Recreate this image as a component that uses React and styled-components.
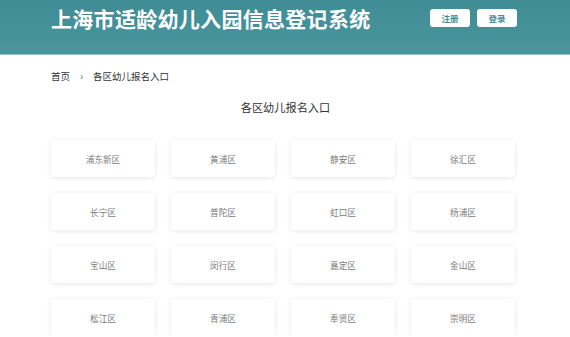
import React from "react";
import styled, { createGlobalStyle } from "styled-components";

const Global = createGlobalStyle`
  html, body { margin: 0; padding: 0; background: #fff; }
  body { font-family: "Noto Sans CJK SC", "Noto Sans", sans-serif; }
  * { box-sizing: border-box; }
`;

const Header = styled.header`
  height: 55px;
  background: linear-gradient(180deg, #3f8c95 0%, #45929b 60%, #4a959d 100%);
  border-bottom: 1px solid #8cc1c6;
`;

const Inner = styled.div`
  width: 466px;
  margin-left: 51px;
`;

const HeaderInner = styled(Inner)`
  display: flex;
  align-items: flex-start;
  justify-content: space-between;
  padding-top: 6px;
`;

const Title = styled.h1`
  margin: 0;
  color: #fff;
  font-size: 21px;
  line-height: 24px;
  font-weight: 700;
  letter-spacing: 0.3px;
`;

const Actions = styled.div`
  display: flex;
  gap: 7px;
  padding-top: 3px;
`;

const HeadButton = styled.button`
  width: 40px;
  height: 18px;
  border: none;
  border-radius: 3px;
  background: #fff;
  color: #3f8e95;
  font-family: inherit;
  font-size: 8.5px;
  font-weight: 700;
  padding: 0;
  line-height: 18px;
  cursor: pointer;
`;

const Crumbs = styled(Inner)`
  display: flex;
  align-items: center;
  gap: 10px;
  margin-top: 14px;
  font-size: 9.5px;
  color: #333;
  line-height: 14px;
`;

const Sep = styled.span`
  font-size: 10px;
  color: #555;
`;

const Heading = styled.h2`
  margin: 16px 0 0;
  text-align: center;
  font-size: 11.2px;
  font-weight: 400;
  color: #333;
  line-height: 16px;
  padding-left: 1px;
`;

const Grid = styled(Inner)`
  display: grid;
  grid-template-columns: repeat(4, 104px);
  column-gap: 16px;
  row-gap: 16px;
  margin-top: 25px;
`;

const Card = styled.div`
  height: 37px;
  background: #fff;
  border-radius: 3px;
  box-shadow: 0 1px 5px rgba(0, 0, 0, 0.1);
  display: flex;
  align-items: center;
  justify-content: center;
  font-size: 8.6px;
  color: #7a7a7a;
`;

const districts = [
  "浦东新区", "黄浦区", "静安区", "徐汇区",
  "长宁区", "普陀区", "虹口区", "杨浦区",
  "宝山区", "闵行区", "嘉定区", "金山区",
  "松江区", "青浦区", "奉贤区", "崇明区",
];

export default function App() {
  return (
    <>
      <Global />
      <Header>
        <HeaderInner>
          <Title>上海市适龄幼儿入园信息登记系统</Title>
          <Actions>
            <HeadButton>注册</HeadButton>
            <HeadButton>登录</HeadButton>
          </Actions>
        </HeaderInner>
      </Header>
      <Crumbs>
        <span>首页</span>
        <Sep>›</Sep>
        <span>各区幼儿报名入口</span>
      </Crumbs>
      <Heading>各区幼儿报名入口</Heading>
      <Grid>
        {districts.map((d) => (
          <Card key={d}>{d}</Card>
        ))}
      </Grid>
    </>
  );
}
